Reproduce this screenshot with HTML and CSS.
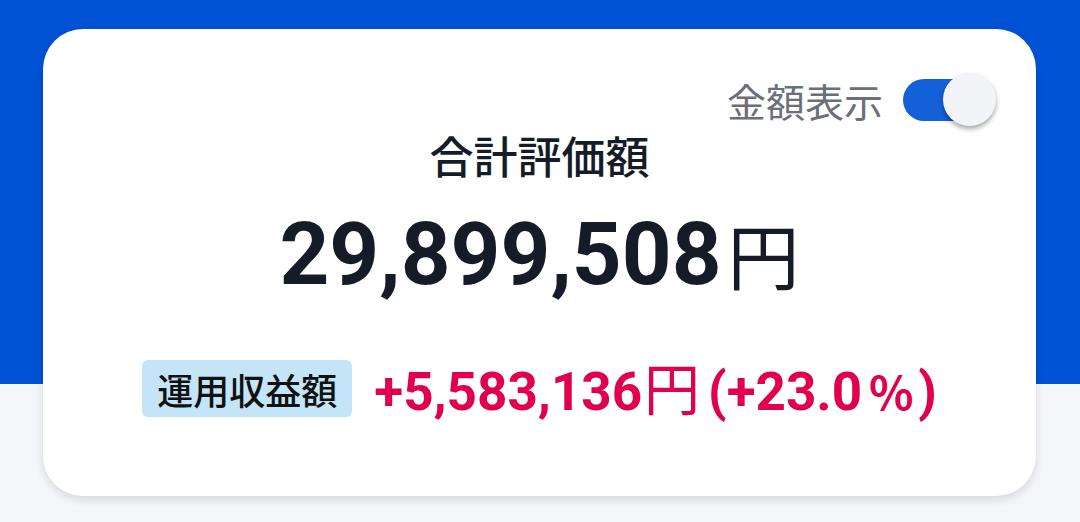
FILE: index.html
```html
<!DOCTYPE html>
<html lang="ja">
<head>
<meta charset="utf-8">
<link rel="stylesheet" href="styles.css">
</head>
<body>
<div class="page">
  <div class="band"></div>
  <div class="card">
    <div class="toggle-row">
      <span class="toggle-label">金額表示</span>
      <span class="switch"><span class="track"></span><span class="thumb"></span></span>
    </div>
    <div class="title">合計評価額</div>
    <div class="total"><span class="num">29,899,508</span><span class="yen">円</span></div>
    <div class="profit-row">
      <span class="badge">運用収益額</span>
      <span class="profit"><span class="pnum">+5,583,136</span><span class="pyen">円</span><span class="pct">(+23.0</span><span class="ppct">％</span><span class="pct">)</span></span>
    </div>
  </div>
</div>
</body>
</html>
```
FILE: styles.css
```css
* { box-sizing: border-box; }
html, body { margin: 0; padding: 0; }
body {
  width: 1080px; height: 522px; overflow: hidden;
  background: #f4f6fa;
  font-family: Roboto, "Noto Sans CJK JP", sans-serif;
}
.page { position: relative; width: 1080px; height: 522px; padding: 29px 44px 0 43px; }
.band {
  position: absolute; left: 0; top: 0; width: 1080px; height: 384px;
  background: #0052d4;
}
.card {
  position: relative;
  height: 467px;
  background: #fff;
  border-radius: 40px;
  box-shadow: 0 4px 10px rgba(0,0,0,0.12);
  display: flex; flex-direction: column; align-items: center;
  padding: 0 40px;
}
.toggle-row {
  align-self: flex-end;
  display: flex; align-items: center; gap: 20px;
  margin-top: 44px; margin-right: -1px;
  height: 54px;
}
.toggle-label {
  font-family: "Noto Sans CJK JP", sans-serif;
  font-size: 39px; color: #6b6f78; line-height: 1;
}
.switch { position: relative; width: 94px; height: 54px; display: block; }
.track {
  position: absolute; left: 0; top: 6px; width: 80px; height: 42px;
  border-radius: 21px; background: #1460d8;
}
.thumb {
  position: absolute; left: 40px; top: 0; width: 53px; height: 53px;
  border-radius: 50%; background: #f3f4f8;
  box-shadow: 0 3px 5px rgba(0,0,0,0.35);
}
.title {
  font-family: "Noto Sans CJK JP", sans-serif;
  font-size: 44px; font-weight: 500; color: #161c27; line-height: 1;
  margin-top: 6px;
}
.total {
  display: flex; align-items: baseline; color: #161c27;
  margin-top: 34px; line-height: 1;
}
.num { font-family: Roboto, sans-serif; font-weight: 700; font-size: 87px; letter-spacing: 0; }
.yen { font-family: "Noto Sans CJK JP", sans-serif; font-size: 72px; font-weight: 400; margin-left: 6px; }
.profit-row {
  display: flex; align-items: center; gap: 22px;
  margin-top: 60px;
}
.badge {
  font-family: "Noto Sans CJK JP", sans-serif;
  font-size: 36px; font-weight: 500; color: #111;
  background: #c4e5f8; border-radius: 6px;
  height: 57px; padding: 0 15px;
  display: flex; align-items: center;
}
.profit { color: #e0004e; display: flex; align-items: baseline; line-height: 1; }
.pnum { font-family: Roboto, sans-serif; font-weight: 700; font-size: 53px; }
.pyen { font-family: "Noto Sans CJK JP", sans-serif; font-size: 56px; font-weight: 400; margin-left: 2px; margin-right: 8px; }
.pct { font-family: Roboto, sans-serif; font-weight: 700; font-size: 53px; }
.ppct { font-family: "Noto Sans CJK JP", sans-serif; font-weight: 700; font-size: 46px; margin-left: 6px; margin-right: 4px; }
```
